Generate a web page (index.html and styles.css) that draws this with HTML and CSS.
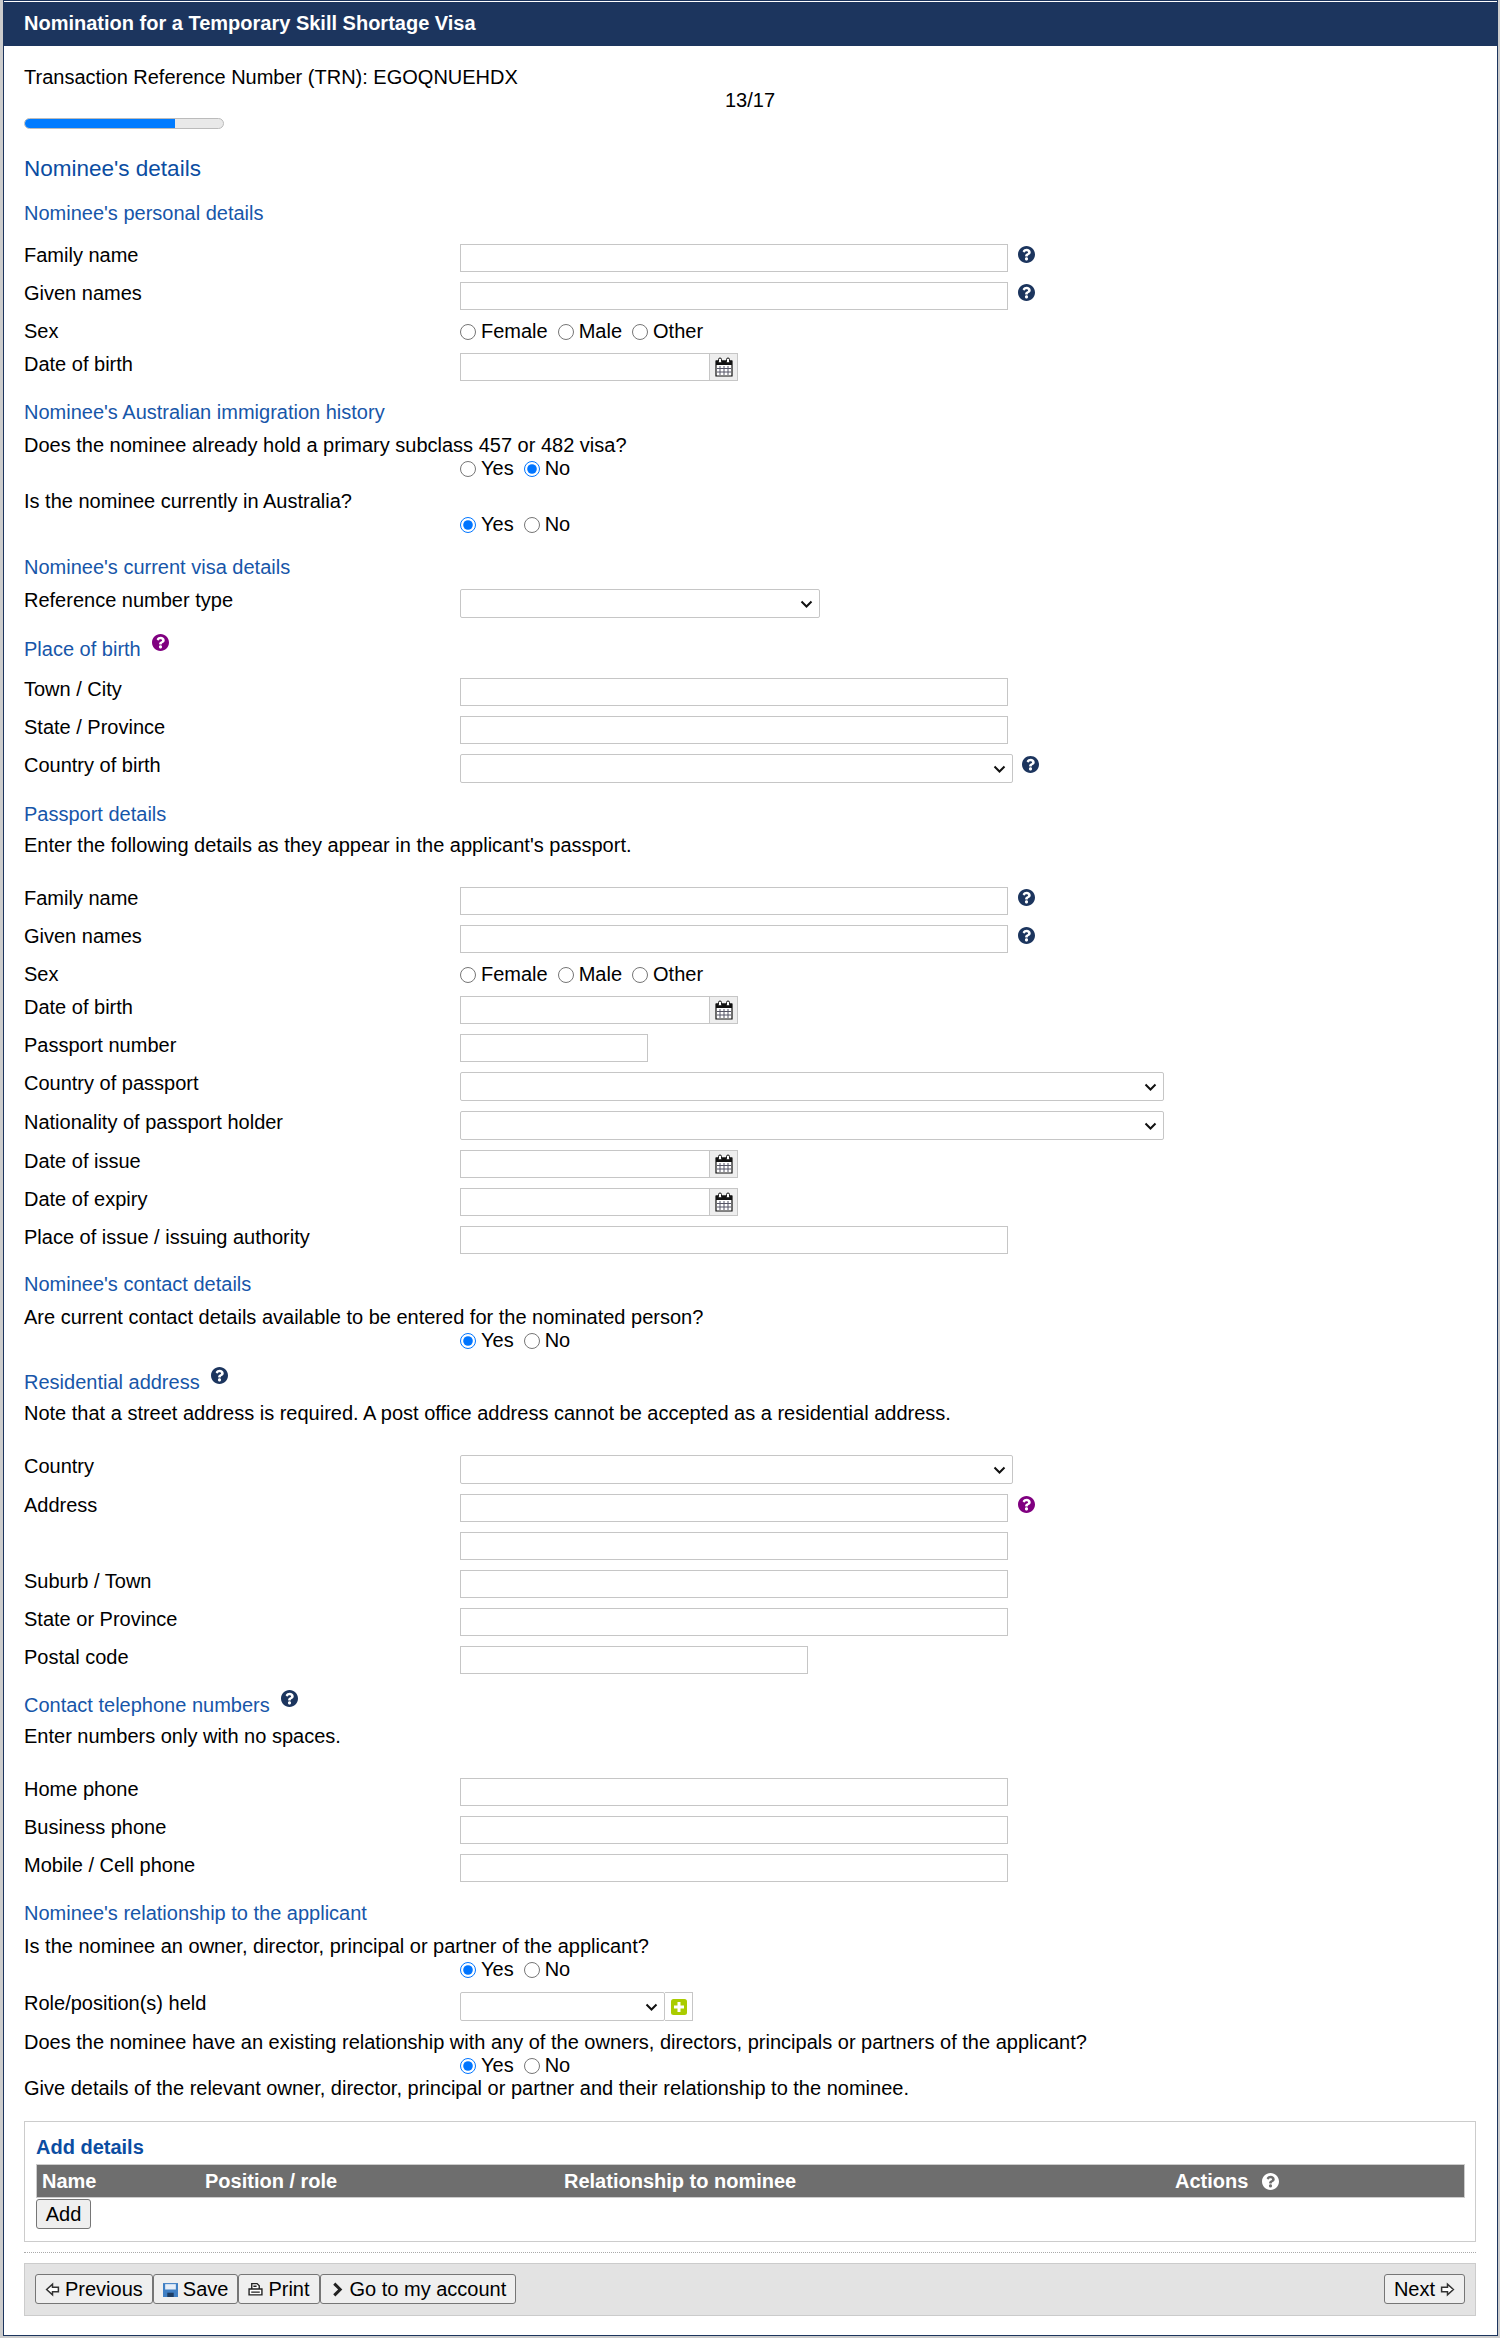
FILE: index.html
```html
<!DOCTYPE html>
<html lang="en">
<head>
<meta charset="utf-8">
<title>Nomination for a Temporary Skill Shortage Visa</title>
<link rel="stylesheet" href="styles.css">
</head>
<body>
<svg class="defs" width="0" height="0" aria-hidden="true">
  <symbol id="help" viewBox="8 8 496 496">
    <path fill="currentColor" d="M504 256c0 136.997-111.043 248-248 248S8 392.997 8 256C8 119.083 119.043 8 256 8s248 111.083 248 248zM262.655 90c-54.497 0-89.255 22.957-116.549 63.758-3.536 5.286-2.353 12.415 2.715 16.258l34.699 26.31c5.205 3.947 12.621 3.008 16.665-2.122 17.864-22.658 30.113-35.797 57.303-35.797 20.429 0 45.698 13.148 45.698 32.958 0 14.976-12.363 22.667-32.534 33.976C247.128 238.528 216 254.941 216 296v4c0 6.627 5.373 12 12 12h56c6.627 0 12-5.373 12-12v-1.333c0-28.462 83.186-29.647 83.186-106.667 0-58.002-60.165-102-116.531-102zM256 338c-25.365 0-46 20.635-46 46 0 25.364 20.635 46 46 46s46-20.636 46-46c0-25.365-20.635-46-46-46z"/>
  </symbol>
  <symbol id="cal" viewBox="0 0 18 20">
    <path d="M1 4h16v15H1z" fill="#fff" stroke="#111" stroke-width="1.2"/>
    <path d="M1 3.500h16V8H1z" fill="#111"/>
    <path d="M5 9v9M9 9v9M13 9v9M2 11.500h14M2 15h14" stroke="#556" stroke-width="1"/>
    <rect x="3.500" y="1" width="3" height="5" rx="1.500" fill="#fff" stroke="#111"/>
    <rect x="11.500" y="1" width="3" height="5" rx="1.500" fill="#fff" stroke="#111"/>
  </symbol>
</svg>
<main class="page">
  <h1 class="titlebar">Nomination for a Temporary Skill Shortage Visa</h1>
  <div class="content">
    <p class="trn">Transaction Reference Number (TRN): EGOQNUEHDX</p>
    <p class="count">13/17</p>
    <div class="progress"><div class="progress-fill"></div></div>
    <h2 class="page-heading">Nominee's details</h2>

    <h3 class="sub">Nominee's personal details</h3>
    <div class="row after-sub"><label>Family name</label><div class="ctl"><input class="text w548"><svg class="q navy"><use href="#help"/></svg></div></div>
    <div class="row"><label>Given names</label><div class="ctl"><input class="text w548"><svg class="q navy"><use href="#help"/></svg></div></div>
    <div class="row"><label>Sex</label><div class="ctl radios">
      <label class="r"><input type="radio" name="s1">Female</label><label class="r"><input type="radio" name="s1">Male</label><label class="r"><input type="radio" name="s1">Other</label></div></div>
    <div class="row"><label>Date of birth</label><div class="ctl"><input class="text w250"><span class="calbtn"><svg class="calicon"><use href="#cal"/></svg></span></div></div>

    <h3 class="sub">Nominee's Australian immigration history</h3>
    <p class="q-text">Does the nominee already hold a primary subclass 457 or 482 visa?</p>
    <div class="radios indent"><label class="r"><input type="radio" name="a">Yes</label><label class="r"><input type="radio" name="a" checked>No</label></div>
    <p class="q-text">Is the nominee currently in Australia?</p>
    <div class="radios indent"><label class="r"><input type="radio" name="b" checked>Yes</label><label class="r"><input type="radio" name="b">No</label></div>

    <h3 class="sub">Nominee's current visa details</h3>
    <div class="row ref-row"><label>Reference number type</label><div class="ctl"><select class="w360"></select></div></div>

    <h3 class="sub has-q">Place of birth<svg class="q purple up"><use href="#help"/></svg></h3>
    <div class="row place-row"><label>Town / City</label><div class="ctl"><input class="text w548"></div></div>
    <div class="row"><label>State / Province</label><div class="ctl"><input class="text w548"></div></div>
    <div class="row"><label>Country of birth</label><div class="ctl"><select class="w553"></select><svg class="q navy tight"><use href="#help"/></svg></div></div>

    <h3 class="sub">Passport details</h3>
    <p class="note">Enter the following details as they appear in the applicant's passport.</p>
    <div class="row"><label>Family name</label><div class="ctl"><input class="text w548"><svg class="q navy"><use href="#help"/></svg></div></div>
    <div class="row"><label>Given names</label><div class="ctl"><input class="text w548"><svg class="q navy"><use href="#help"/></svg></div></div>
    <div class="row"><label>Sex</label><div class="ctl radios">
      <label class="r"><input type="radio" name="s2">Female</label><label class="r"><input type="radio" name="s2">Male</label><label class="r"><input type="radio" name="s2">Other</label></div></div>
    <div class="row"><label>Date of birth</label><div class="ctl"><input class="text w250"><span class="calbtn"><svg class="calicon"><use href="#cal"/></svg></span></div></div>
    <div class="row"><label>Passport number</label><div class="ctl"><input class="text w188"></div></div>
    <div class="row"><label>Country of passport</label><div class="ctl"><select class="w704"></select></div></div>
    <div class="row"><label>Nationality of passport holder</label><div class="ctl"><select class="w704"></select></div></div>
    <div class="row"><label>Date of issue</label><div class="ctl"><input class="text w250"><span class="calbtn"><svg class="calicon"><use href="#cal"/></svg></span></div></div>
    <div class="row"><label>Date of expiry</label><div class="ctl"><input class="text w250"><span class="calbtn"><svg class="calicon"><use href="#cal"/></svg></span></div></div>
    <div class="row"><label>Place of issue / issuing authority</label><div class="ctl"><input class="text w548"></div></div>

    <h3 class="sub snug">Nominee's contact details</h3>
    <p class="q-text">Are current contact details available to be entered for the nominated person?</p>
    <div class="radios indent"><label class="r"><input type="radio" name="c" checked>Yes</label><label class="r"><input type="radio" name="c">No</label></div>

    <h3 class="sub has-q snug">Residential address<svg class="q navy up"><use href="#help"/></svg></h3>
    <p class="note">Note that a street address is required. A post office address cannot be accepted as a residential address.</p>
    <div class="row"><label>Country</label><div class="ctl"><select class="w553"></select></div></div>
    <div class="row"><label>Address</label><div class="ctl"><input class="text w548"><svg class="q purple"><use href="#help"/></svg></div></div>
    <div class="row"><span></span><div class="ctl"><input class="text w548"></div></div>
    <div class="row"><label>Suburb / Town</label><div class="ctl"><input class="text w548"></div></div>
    <div class="row"><label>State or Province</label><div class="ctl"><input class="text w548"></div></div>
    <div class="row"><label>Postal code</label><div class="ctl"><input class="text w348"></div></div>

    <h3 class="sub has-q">Contact telephone numbers<svg class="q navy up"><use href="#help"/></svg></h3>
    <p class="note">Enter numbers only with no spaces.</p>
    <div class="row"><label>Home phone</label><div class="ctl"><input class="text w548"></div></div>
    <div class="row"><label>Business phone</label><div class="ctl"><input class="text w548"></div></div>
    <div class="row"><label>Mobile / Cell phone</label><div class="ctl"><input class="text w548"></div></div>

    <h3 class="sub">Nominee's relationship to the applicant</h3>
    <p class="q-text">Is the nominee an owner, director, principal or partner of the applicant?</p>
    <div class="radios indent"><label class="r"><input type="radio" name="d" checked>Yes</label><label class="r"><input type="radio" name="d">No</label></div>
    <div class="row role-row"><label>Role/position(s) held</label><div class="ctl"><select class="w205"></select><span class="plus"><svg class="plus-ico" viewBox="0 0 16 16"><rect width="16" height="16" rx="2.500" fill="#aacc00"/><path d="M6.500 3h3v3.500h3.500v3H9.500V13h-3V9.500H3v-3h3.500z" fill="#fff"/></svg></span></div></div>
    <p class="q-text">Does the nominee have an existing relationship with any of the owners, directors, principals or partners of the applicant?</p>
    <div class="radios indent"><label class="r"><input type="radio" name="e" checked>Yes</label><label class="r"><input type="radio" name="e">No</label></div>
    <p class="give">Give details of the relevant owner, director, principal or partner and their relationship to the nominee.</p>

    <section class="panel">
      <h4 class="panel-title">Add details</h4>
      <div class="thead">
        <span class="c-name">Name</span><span class="c-pos">Position / role</span><span class="c-rel">Relationship to nominee</span>
        <span class="c-act">Actions<svg class="q white"><use href="#help"/></svg></span>
      </div>
      <button class="btn add" type="button">Add</button>
    </section>
    <hr class="dots">
    <nav class="actions">
      <div class="group">
        <button class="btn" type="button"><svg class="ico" viewBox="0 0 14 14"><path d="M1.500 7 7 2v3h5.500v4H7v3z" fill="#fff" stroke="#333" stroke-width="1.400"/></svg>Previous</button>
        <button class="btn" type="button"><svg class="ico" viewBox="0 0 14 14"><path d="M0 1h14v13H0z" fill="#3f7fc4"/><path d="M2 2h10v5H2z" fill="#e6eef8"/><path d="M4 10h6v4H4z" fill="#1d3d63"/></svg>Save</button>
        <button class="btn" type="button"><svg class="ico" viewBox="0 0 14 14"><path d="M3.500 6.500V1.500h5l2 2v3M1 6.500h12V12H1z" fill="#fff" stroke="#222" stroke-width="1.300"/><path d="M3 9.500h8M5 4h3" stroke="#222" stroke-width="1.300"/></svg>Print</button>
        <button class="btn" type="button"><svg class="ico" viewBox="0 0 14 14"><path d="m4 1.500 5.500 5.500L4 12.500" fill="none" stroke="#222" stroke-width="2.800"/></svg>Go to my account</button>
      </div>
      <button class="btn" type="button">Next<svg class="ico after" viewBox="0 0 14 14"><path d="M12.500 7 7 2v3H1.500v4H7v3z" fill="#fff" stroke="#333" stroke-width="1.400"/></svg></button>
    </nav>
  </div>
</main>
</body>
</html>
```
FILE: styles.css
```css
* { box-sizing: border-box; }
html, body { margin: 0; padding: 0; background: #ccc; }
body { font-family: "Liberation Sans", Arial, sans-serif; font-size: 20px; color: #000; line-height: 23px; padding: 0 2px 2px 3px; }
.defs { position: absolute; }
.page { width: 1495px; height: 2336px; background: #fff; border: 1px solid #1c355e; }
.titlebar { margin: 1px 0 0; height: 44px; padding: 0 20px; background: #1c355e; color: #fff; font-size: 20px; font-weight: bold; line-height: 43px; }
.content { padding: 0 21px 0 20px; }
p { margin: 0; }
.trn { padding-top: 20px; }
.count { text-align: center; }
.progress { width: 200px; height: 11px; margin-top: 6px; border: 1px solid #bbb; border-radius: 6px; background: #e9e9e9; overflow: hidden; }
.progress-fill { width: 76%; height: 100%; background: #007bff; }
.page-heading { margin: 27px 0 0; font-size: 22.500px; font-weight: normal; color: #0b4da2; line-height: 26px; }
.sub { margin: 20px 0 0; height: 23px; font-size: 20px; font-weight: normal; color: #1756a9; line-height: 23px; }
.sub.snug { margin-top: 19px; }
.sub.has-q { display: flex; align-items: flex-start; }
.row { display: grid; grid-template-columns: 436px 1fr; margin-top: 10px; }
.row.after-sub { margin-top: 19px; }
.row.ref-row { margin-top: 10px; }
.row.place-row { margin-top: 17px; }
.row.role-row { margin-top: 11px; }
.row > label { display: block; }
.ctl { display: flex; align-items: flex-start; }
.text { display: block; height: 28px; border: 1px solid #c6c6c6; background: #fff; border-radius: 0; margin: 0; font-family: inherit; font-size: 20px; }
select { display: block; height: 29px; border: 1px solid #c6c6c6; border-radius: 2px; margin: 0; font-family: inherit; font-size: 20px; appearance: none; background: #fff url("data:image/svg+xml,%3Csvg xmlns='http://www.w3.org/2000/svg' viewBox='0 0 13 8'%3E%3Cpath d='M1.500 1.500 6.500 6.500 11.500 1.500' fill='none' stroke='%23111' stroke-width='2'/%3E%3C/svg%3E") no-repeat right 6px center / 13px 8px; }
.w548 { width: 548px; }
.w553 { width: 553px; }
.w704 { width: 704px; }
.w360 { width: 360px; }
.w250 { width: 250px; }
.w188 { width: 188px; }
.w348 { width: 348px; }
.w205 { width: 205px; }
.calbtn { display: flex; align-items: center; justify-content: center; width: 28px; height: 28px; background: #eee; border: 1px solid #c6c6c6; border-left: 0; }
.calicon { width: 18px; height: 20px; }
.q { width: 17px; height: 17px; margin-left: 10px; margin-top: 2px; flex: none; }
.q.tight { margin-left: 9px; }
.navy { color: #1c355e; }
.purple { color: #800080; }
.white { color: #fff; margin-left: 14px; margin-top: 0; }
.q.up { margin-left: 11px; margin-top: -4px; }
.radios { display: flex; gap: 10px; align-items: center; height: 23px; }
.r { display: inline-flex; align-items: center; }
input[type="radio"] { width: 16px; height: 16px; margin: 0 5px 0 0; }
.indent { margin-left: 436px; }
.q-text { margin-top: 10px; }
.note { margin-top: 8px; margin-bottom: 30px; }
.plus { display: flex; align-items: center; justify-content: center; width: 28px; height: 29px; border: 1px solid #c6c6c6; border-left: 0; }
.plus-ico { width: 16px; height: 16px; }
.panel { margin-top: 21px; padding: 14px 10px 10px 11px; border: 1px solid #ccc; height: 121px; }
.panel-title { margin: 0; font-size: 20px; font-weight: bold; color: #0b4da2; }
.thead { display: flex; align-items: center; height: 34px; margin-top: 5px; background: #6e6e6e; border: 1px solid #ccc; color: #fff; font-weight: bold; }
.c-name { width: 168px; padding-left: 5px; }
.c-pos { width: 359px; }
.c-rel { width: 611px; }
.c-act { display: inline-flex; align-items: center; }
.btn { display: inline-flex; align-items: center; height: 30px; padding: 0 9px; background: #efefef; border: 1px solid #767676; border-radius: 3px; font-family: inherit; font-size: 20px; color: #000; margin: 0; }
.add { margin-top: 1px; display: flex; justify-content: center; width: 55px; }
.dots { border: 0; border-top: 1px dotted #aaa; margin: 10px 0 0; }
.actions { display: flex; justify-content: space-between; margin-top: 10px; padding: 10px; height: 53px; background: #e3e3e3; border: 1px solid #ccc; }
.group { display: flex; }
.ico { width: 15px; height: 15px; margin-right: 5px; }
.ico.after { margin: 0 0 0 5px; }
```
